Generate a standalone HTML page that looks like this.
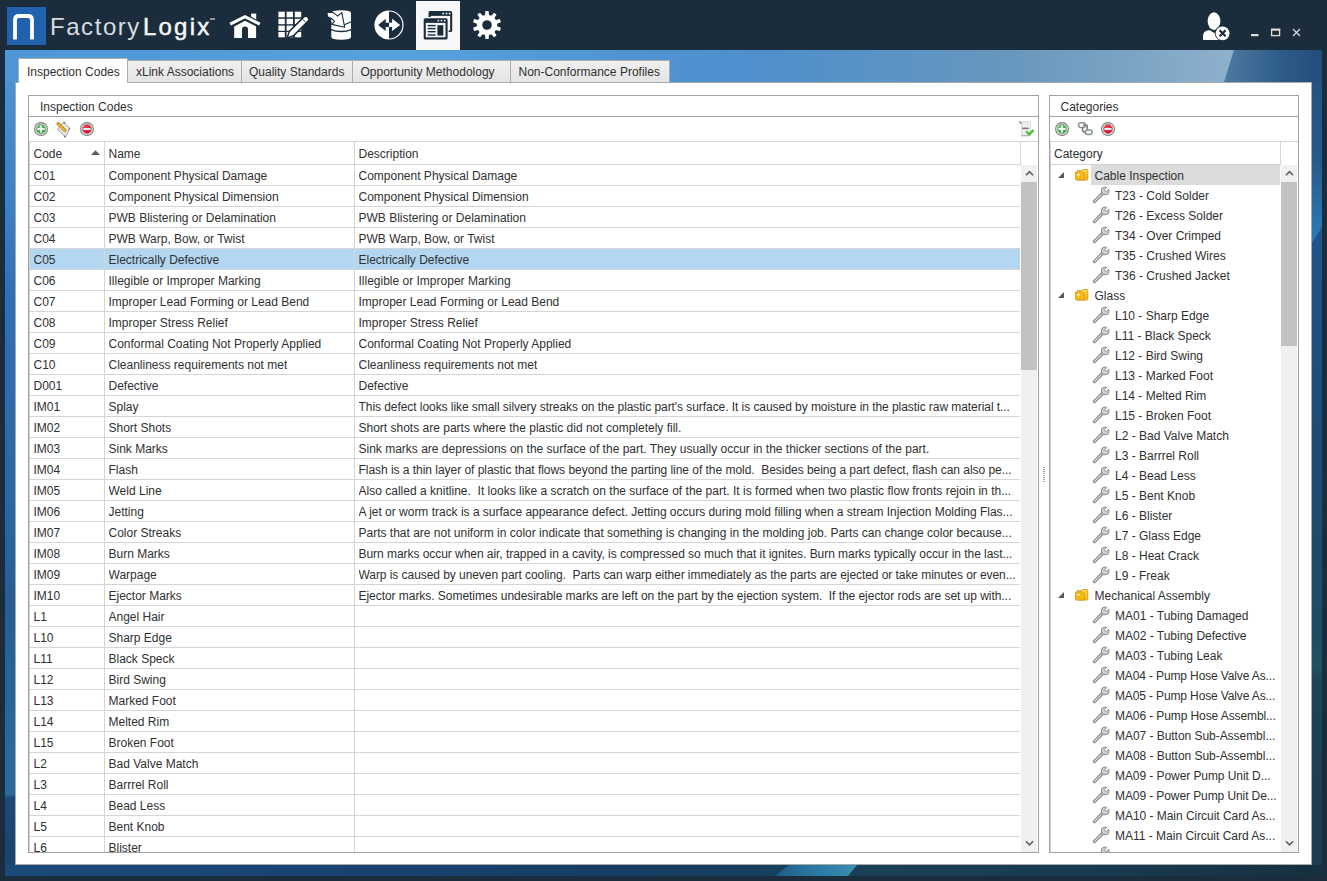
<!DOCTYPE html>
<html><head><meta charset="utf-8"><title>FactoryLogix</title>
<style>
*{box-sizing:border-box;margin:0;padding:0}
html,body{width:1327px;height:881px;overflow:hidden;background:#1b2d3c;font-family:"Liberation Sans",sans-serif;font-size:12px;color:#303030;position:relative}
.a{position:absolute}
svg{position:absolute;overflow:visible}
/* background */
#bgl{left:5px;top:50px;width:1317px;height:826px;background:linear-gradient(180deg,#4e96d6 0px,#3b82c6 150px,#2f6fb5 250px,#2a67a6 450px,#245e92 550px,#2a6c9e 744px,#1c4a7a 748px,#17426c 826px)}
#bgt{left:5px;top:50px;width:1317px;height:32px;background:linear-gradient(90deg,#4e96d6 0px,#56a2de 400px,#4e93d2 650px,#4f8fcc 760px,#5b93c4 880px,#6797bd 1000px,#7aa3c4 1120px,#8fb1cc 1230px)}
#bgd{left:1224px;top:50px;width:98px;height:32px;clip-path:polygon(10px 0,98px 0,98px 32px,0 32px);background:linear-gradient(90deg,#4b7aa2 0,#3d6b95 30px,#2c5a87 60px,#234d7a 98px)}
#bgr{left:1312px;top:82px;width:10px;height:794px;background:linear-gradient(180deg,#255282 0,#21548a 161px,#1f4f80 260px,#1e4a70 400px,#1f4c62 560px,#22545f 585px,#1d4354 600px,#1c3d4e 794px)}
#bgr2{left:1312px;top:82px;width:10px;height:162px;clip-path:polygon(0 0,10px 0,10px 145px,0 161px);background:linear-gradient(180deg,#255282 0,#265a8c 80px,#2a74ae 140px,#2b7ab4 161px)}
#bgb{left:5px;top:865px;width:1317px;height:11px;background:linear-gradient(90deg,#1b4b7a 0,#184473 300px,#163d62 650px,#173f5e 770px,#1a4058 860px,#183a50 1100px,#17303f 1317px)}
#bgh{left:775px;top:865px;width:82px;height:11px;clip-path:polygon(14px 0,82px 0,73px 11px,0 11px);background:linear-gradient(90deg,#1f5d84 0,#2a7aa3 40px,#3a8db3 82px)}
/* header */
#logo{left:7px;top:7px;width:39px;height:38px;background:#2062ad}
.brand{top:16px;font-size:24px;line-height:22px;color:#f4f6f8;white-space:nowrap}
#actbtn{left:416px;top:1px;width:44px;height:49px;background:#f8f8fa}
/* panel */
#panel{left:15px;top:82px;width:1297px;height:783px;background:#fff;border:1px solid #a9a9a9}
.tab{top:60px;height:23px;border:1px solid #acacac;background:linear-gradient(180deg,#f0f0f0,#e4e4e4);}
.tab.act{top:58px;height:25px;background:#fff;border-bottom:none;z-index:2}
.tabt{white-space:nowrap;z-index:3}
/* group boxes */
.gb{border:1px solid #a0a0a0;background:#fff}
.hl{height:1px;background:#a0a0a0}
.gl{background:#d4d4d4}
.lbl{white-space:nowrap;line-height:14px}
/* grid */
.r{position:absolute;left:30px;width:990px;height:21px;border-bottom:1px solid #d5d5d5;line-height:20px;white-space:nowrap}
.r.sel{background:#b3d7f1}
.r span{position:absolute;top:1px;overflow:hidden}
.c1{left:3.5px}
.c2{left:78.5px}
.c3{left:328.5px}
.vl{width:1px;background:#d5d5d5}
.sb{background:#f0f0f0}
.th{background:#c2c2c2}
/* tree */
.tr{position:absolute;z-index:0;left:1051px;width:229px;height:20px;line-height:20px;white-space:nowrap}
.tr span{position:absolute;top:1px}
.tt0{left:43.5px}
.tt1{left:64px}
.tsel:after{content:"";position:absolute;left:40px;top:0;width:189px;height:20px;background:#dcdcdc;z-index:-1}
.exp{position:absolute;left:7px;top:7px;width:0;height:0;border-left:6px solid transparent;border-bottom:6px solid #595959}
.fold{position:absolute;left:24px;top:4px}
.wr{position:absolute;left:40px;top:0}

</style></head><body>
<svg width="0" height="0" style="position:absolute">
<defs>
<radialGradient id="gG" cx="40%" cy="35%" r="70%"><stop offset="0" stop-color="#6fd06a"/><stop offset="1" stop-color="#1f9a27"/></radialGradient>
<radialGradient id="gR" cx="40%" cy="35%" r="70%"><stop offset="0" stop-color="#ff4a5a"/><stop offset="1" stop-color="#d4001c"/></radialGradient>
<linearGradient id="gF" x1="0" y1="0" x2="1" y2="1"><stop offset="0" stop-color="#fff27a"/><stop offset="1" stop-color="#f2b400"/></linearGradient>
<g id="wrench">
<path d="M3.4 16.6 L11 9" stroke="#8a8a8a" stroke-width="3.3" stroke-linecap="round"/>
<path d="M3.4 16.6 L11 9" stroke="#e4e4ec" stroke-width="1.1" stroke-linecap="round" stroke-dasharray="0.9 0.9"/>
<circle cx="14.2" cy="5.9" r="3.9" fill="#d0d0d0" stroke="#8a8a8a" stroke-width="1"/>
<rect x="-1.3" y="-5.8" width="2.6" height="5.6" fill="#fff" stroke="#8a8a8a" stroke-width="0.9" transform="translate(14.2 5.9) rotate(45)"/>
<rect x="-1.85" y="-7" width="3.7" height="3.2" fill="#fff" transform="translate(14.2 5.9) rotate(45)"/>
</g>
<g id="addI">
<circle cx="7" cy="7" r="6.4" fill="#fff" stroke="#7c7c7c" stroke-width="1.1"/>
<circle cx="7" cy="7" r="4.9" fill="none" stroke="#9c9c9c" stroke-width="0.9"/>
<circle cx="7" cy="7" r="4.4" fill="url(#gG)"/>
<rect x="3.4" y="6.1" width="7.2" height="1.8" fill="#fff"/><rect x="6.1" y="3.4" width="1.8" height="7.2" fill="#fff"/>
</g>
<g id="remI">
<circle cx="7" cy="7" r="6.4" fill="#fff" stroke="#7c7c7c" stroke-width="1.1"/>
<circle cx="7" cy="7" r="4.9" fill="none" stroke="#9c9c9c" stroke-width="0.9"/>
<circle cx="7" cy="7" r="4.4" fill="url(#gR)"/>
<rect x="3.4" y="6" width="7.2" height="2" fill="#eefafa"/>
</g>
<g id="fold">
<path d="M2.4 1.6 H7 L7.9 0.5 H12 Q12.8 0.5 12.8 1.3 V10.2 Q12.8 11 12 11 H2.4 Z" fill="url(#gF)" stroke="#d9962a" stroke-width="0.9"/>
<path d="M0.5 3.6 Q0.5 2.9 1.2 2.9 H7.4 L9.4 4.3 V11 H1.3 Q0.6 11 0.6 10.3 Z" fill="#f6bb0a" stroke="#d9962a" stroke-width="0.9"/>
<rect x="2" y="5" width="3" height="1.3" fill="#fff"/>
</g>
</defs>
</svg>

<div id="bgl" class="a"></div>
<div id="bgt" class="a"></div>
<div id="bgd" class="a"></div>
<div id="bgr" class="a"></div>
<div id="bgr2" class="a"></div>
<div id="bgb" class="a"></div>
<div id="bgh" class="a"></div>

<!-- header -->
<div id="logo" class="a"></div>
<div id="actbtn" class="a"></div>
<svg style="left:0;top:0" width="1327" height="50">
<path d="M15 39.5 V20 Q15 16 19 16 H28 Q32 16 32 20 V39.5" fill="none" stroke="#fff" stroke-width="3.8"/>
<!-- home -->
<rect x="251.1" y="13.6" width="5.1" height="7" fill="#fff"/>
<path d="M230.6 24 L245 16.7 L259.4 24" fill="none" stroke="#1b2d3c" stroke-width="5.4"/>
<path d="M230.2 24.2 L245 16.7 L259.8 24.2" fill="none" stroke="#fff" stroke-width="3.1"/>
<path d="M234.2 26.4 L245 20.8 L256.1 26.4 V38 H248 V29.6 Q248 26.6 245 26.6 Q242 26.6 242 29.6 V38 H234.2 Z" fill="#fff"/>
<!-- grid edit -->
<g fill="#fff">
<rect x="278.4" y="11.7" width="6.4" height="5.6"/><rect x="286.6" y="11.7" width="6.4" height="5.6"/><rect x="294.8" y="11.7" width="6.4" height="5.6"/>
<rect x="278.4" y="18.8" width="6.4" height="5.4"/><rect x="286.6" y="18.8" width="6.4" height="5.4"/><rect x="294.8" y="18.8" width="6.4" height="5.4"/>
<rect x="278.4" y="25.6" width="6.4" height="5.2"/><rect x="286.6" y="25.6" width="6.4" height="5.2"/><rect x="294.8" y="25.6" width="6.4" height="5.2"/>
<rect x="278.4" y="32" width="6.4" height="5.3"/><rect x="286.6" y="32" width="6.4" height="5.3"/><rect x="294.8" y="32" width="6.4" height="5.3"/>
</g>
<path d="M288.3 36.7 L289.9 31.9 L304.4 17.4 A2.3 2.3 0 0 1 307.6 20.6 L293.1 35.1 Z" fill="#1b2d3c" stroke="#1b2d3c" stroke-width="3" stroke-linejoin="round"/>
<path d="M288.3 36.7 L289.9 31.9 L304.4 17.4 A2.3 2.3 0 0 1 307.6 20.6 L293.1 35.1 Z" fill="#fff"/>
<path d="M302.6 19.2 L305.8 22.4" stroke="#1b2d3c" stroke-width="0.9"/>
<!-- db -->
<path d="M331.3 13 Q331.3 10.2 341.2 10.2 Q351 10.2 351 13 V37 Q351 39.7 341.2 39.7 Q331.3 39.7 331.3 37 Z" fill="#fff"/>
<path d="M330.5 29.3 Q341 33.8 352 29.3" fill="none" stroke="#1b2d3c" stroke-width="1.4"/>
<path d="M340 25.5 Q346 24.6 352 21.5" fill="none" stroke="#1b2d3c" stroke-width="1.3"/>
<path d="M327 12.3 L333.5 12.6 L337.6 16.2 L341.8 12.6 L344.6 27.2 L331.8 24.4 L334.6 21.3 L331.5 18.5 L327.4 16.8 Z" fill="#fff" stroke="#1b2d3c" stroke-width="1.1" stroke-linejoin="round"/>
<path d="M331.2 22 L330.2 25.5" stroke="#1b2d3c" stroke-width="1.4"/>
<!-- arrows circle -->
<circle cx="389" cy="25" r="14.6" fill="#fff"/>
<path d="M389 11.6 A13.4 13.4 0 0 1 389 38.4 Z" fill="#1b2d3c"/>
<path d="M378.2 25 L385.7 18.8 V22.8 H389 V27 H385.7 V31 Z" fill="#1b2d3c"/>
<path d="M400.2 25 L392.1 18.8 V22.8 H389 V27 H392.1 V31 Z" fill="#fff"/>
<!-- windows (active) -->
<g fill="#1b2d3c">
<rect x="428.5" y="11.1" width="23.7" height="21" rx="1.6"/>
</g>
<rect x="430.8" y="15.9" width="19.3" height="14.5" fill="#f8f8fa"/>
<g fill="#f8f8fa"><circle cx="443.2" cy="13.5" r="0.9"/><circle cx="446.5" cy="13.5" r="0.9"/><circle cx="449.6" cy="13.5" r="0.9"/></g>
<rect x="422.5" y="17" width="26.2" height="23.8" fill="#f8f8fa"/>
<rect x="423.7" y="18.2" width="23.9" height="21.4" rx="1.6" fill="#1b2d3c"/>
<rect x="425.8" y="22.9" width="19.7" height="14.4" fill="#f8f8fa"/>
<g fill="#f8f8fa"><circle cx="438.3" cy="20.6" r="0.9"/><circle cx="441.5" cy="20.6" r="0.9"/><circle cx="444.7" cy="20.6" r="0.9"/></g>
<g fill="#1b2d3c"><rect x="427.7" y="24.9" width="7.9" height="1.4"/><rect x="427.7" y="27.9" width="7.9" height="1.4"/><rect x="427.7" y="31" width="7.9" height="1.4"/><rect x="427.7" y="34.3" width="7.9" height="1.4"/>
<rect x="437.4" y="25.2" width="5.9" height="10.4"/></g>
<!-- gear -->
<g transform="translate(487 25)">
<path fill="#fff" fill-rule="evenodd" d="M-1.95 -10.01 L-1.61 -14.11 L1.61 -14.11 L1.95 -10.01 L4.31 -9.24 L6.99 -12.36 L9.59 -10.47 L7.46 -6.96 L8.92 -4.95 L12.92 -5.89 L13.91 -2.83 L10.12 -1.24 L10.12 1.24 L13.91 2.83 L12.92 5.89 L8.92 4.95 L7.46 6.96 L9.59 10.47 L6.99 12.36 L4.31 9.24 L1.95 10.01 L1.61 14.11 L-1.61 14.11 L-1.95 10.01 L-4.31 9.24 L-6.99 12.36 L-9.59 10.47 L-7.46 6.96 L-8.92 4.95 L-12.92 5.89 L-13.91 2.83 L-10.12 1.24 L-10.12 -1.24 L-13.91 -2.83 L-12.92 -5.89 L-8.92 -4.95 L-7.46 -6.96 L-9.59 -10.47 L-6.99 -12.36 L-4.31 -9.24 Z M4.8 0 A4.8 4.8 0 1 0 -4.8 0 A4.8 4.8 0 1 0 4.8 0 Z"/>
</g>
<!-- user -->
<ellipse cx="1214" cy="21.1" rx="6.4" ry="8.8" fill="#fff"/>
<path d="M1203 40 V36 Q1203 30.2 1210 30.2 L1214 33 L1218 30.2 Q1220 30.4 1221 31 V40 Z" fill="#fff"/>
<circle cx="1222.6" cy="33.3" r="7.8" fill="#1b2d3c"/>
<circle cx="1222.6" cy="33.3" r="6.9" fill="#fff"/>
<path d="M1219.6 30.3 L1225.6 36.3 M1225.6 30.3 L1219.6 36.3" stroke="#1b2d3c" stroke-width="2.2"/>
<!-- window controls -->
<rect x="1251" y="34" width="7.5" height="2.2" fill="#e0dcd8"/>
<rect x="1271.6" y="29.4" width="8" height="6.2" fill="none" stroke="#e0dcd8" stroke-width="1.3"/>
<rect x="1271" y="28.7" width="9.2" height="2" fill="#e0dcd8"/>
<path d="M1293 29 L1300 36 M1300 29 L1293 36" stroke="#e0dcd8" stroke-width="1.2"/>
</svg>
<div class="a brand" style="left:50px;letter-spacing:1.55px;color:#d6dce2">Factory</div><div class="a brand" style="left:143px;letter-spacing:2.2px;-webkit-text-stroke:0.5px #f4f6f8">Logix</div><div class="a" style="left:210px;top:18px;width:5px;height:1.5px;background:#8a96a0"></div>

<!-- panel -->
<div id="panel" class="a"></div>
<div class="a tab act" style="left:18px;width:110px"></div>
<div class="a tab" style="left:127px;width:115px"></div>
<div class="a tab" style="left:241px;width:112px"></div>
<div class="a tab" style="left:352px;width:159px"></div>
<div class="a tab" style="left:510px;width:160px"></div>
<div class="a tabt" style="left:27px;top:65px">Inspection Codes</div>
<div class="a tabt" style="left:136px;top:65px">xLink Associations</div>
<div class="a tabt" style="left:249px;top:65px">Quality Standards</div>
<div class="a tabt" style="left:360.5px;top:65px">Opportunity Methodology</div>
<div class="a tabt" style="left:518.5px;top:65px">Non-Conformance Profiles</div>

<!-- left group -->
<div class="a gb" style="left:28px;top:95px;width:1011px;height:758px"></div>
<div class="a hl" style="left:29px;top:116px;width:1009px"></div>
<div class="a lbl ttl" style="left:40px;top:100px">Inspection Codes</div>
<svg style="left:34px;top:122px" width="14" height="14"><use href="#addI"/></svg>
<svg style="left:56px;top:121px" width="16" height="17">
<path d="M7.5 1.2 L14 7.4 L9.6 16 L1.4 8.4 Z" fill="#e2e7ee" stroke="#9a9a9a" stroke-width="0.9" stroke-linejoin="round"/>
<path d="M7.6 1.2 L9 2.4 M13.8 7.4 L12.6 8.6 M9.6 16.2 L8.4 15" stroke="#707070" stroke-width="1.4"/>
<path d="M2.2 2.8 L8.8 9.4" stroke="#c08a18" stroke-width="3.4" stroke-linecap="round"/>
<path d="M2.4 3.2 L8.6 9.4" stroke="#f0c838" stroke-width="1.4" stroke-linecap="round" stroke-dasharray="1 1"/>
</svg>
<svg style="left:80px;top:122px" width="14" height="14"><use href="#remI"/></svg>
<svg style="left:1018px;top:120px" width="17" height="18">
<path d="M3.6 1.6 H12.6 V15.4 H3.6 Z" fill="#e9ecf0" stroke="#cfd2d6" stroke-width="0.8"/>
<path d="M1.2 1.4 L3.6 3.8" stroke="#7a8896" stroke-width="1.3"/>
<rect x="4.2" y="7.6" width="6.4" height="1.5" fill="#777"/>
<path d="M3 15.8 H11.5" stroke="#a8a8a8" stroke-width="1"/>
<path d="M8.8 12 L11.2 14.4 L15 10.6" fill="none" stroke="#50bc36" stroke-width="2.2" stroke-linecap="round" stroke-linejoin="round"/>
</svg>
<div class="a gl" style="left:29px;top:141px;width:1009px;height:1px"></div>
<div class="a gl" style="left:29px;top:141px;width:1px;height:711px"></div>
<div class="a gl" style="left:30px;top:164px;width:990px;height:1px"></div>
<div class="a lbl" style="left:33.5px;top:147px">Code</div>
<svg style="left:90px;top:149px" width="11" height="7"><path d="M1 6 L5.5 1.2 L10 6 Z" fill="#5a5a5a"/></svg>
<div class="a lbl" style="left:108.5px;top:147px">Name</div>
<div class="a lbl" style="left:358.5px;top:147px">Description</div>
<div class="a" style="left:30px;top:165px;width:990px;height:687px;overflow:hidden">
<div class="a" style="left:-30px;top:-165px;width:1327px;height:881px">
<div class="r" style="top:165px"><span class="c1">C01</span><span class="c2">Component Physical Damage</span><span class="c3">Component Physical Damage</span></div>
<div class="r" style="top:186px"><span class="c1">C02</span><span class="c2">Component Physical Dimension</span><span class="c3">Component Physical Dimension</span></div>
<div class="r" style="top:207px"><span class="c1">C03</span><span class="c2">PWB Blistering or Delamination</span><span class="c3">PWB Blistering or Delamination</span></div>
<div class="r" style="top:228px"><span class="c1">C04</span><span class="c2">PWB Warp, Bow, or Twist</span><span class="c3">PWB Warp, Bow, or Twist</span></div>
<div class="r sel" style="top:249px"><span class="c1">C05</span><span class="c2">Electrically Defective</span><span class="c3">Electrically Defective</span></div>
<div class="r" style="top:270px"><span class="c1">C06</span><span class="c2">Illegible or Improper Marking</span><span class="c3">Illegible or Improper Marking</span></div>
<div class="r" style="top:291px"><span class="c1">C07</span><span class="c2">Improper Lead Forming or Lead Bend</span><span class="c3">Improper Lead Forming or Lead Bend</span></div>
<div class="r" style="top:312px"><span class="c1">C08</span><span class="c2">Improper Stress Relief</span><span class="c3">Improper Stress Relief</span></div>
<div class="r" style="top:333px"><span class="c1">C09</span><span class="c2">Conformal Coating Not Properly Applied</span><span class="c3">Conformal Coating Not Properly Applied</span></div>
<div class="r" style="top:354px"><span class="c1">C10</span><span class="c2">Cleanliness requirements not met</span><span class="c3">Cleanliness requirements not met</span></div>
<div class="r" style="top:375px"><span class="c1">D001</span><span class="c2">Defective</span><span class="c3">Defective</span></div>
<div class="r" style="top:396px"><span class="c1">IM01</span><span class="c2">Splay</span><span class="c3" style="letter-spacing:-0.059px">This defect looks like small silvery streaks on the plastic part's surface. It is caused by moisture in the plastic raw material t...</span></div>
<div class="r" style="top:417px"><span class="c1">IM02</span><span class="c2">Short Shots</span><span class="c3">Short shots are parts where the plastic did not completely fill.</span></div>
<div class="r" style="top:438px"><span class="c1">IM03</span><span class="c2">Sink Marks</span><span class="c3">Sink marks are depressions on the surface of the part. They usually occur in the thicker sections of the part.</span></div>
<div class="r" style="top:459px"><span class="c1">IM04</span><span class="c2">Flash</span><span class="c3" style="letter-spacing:-0.035px">Flash is a thin layer of plastic that flows beyond the parting line of the mold.&nbsp; Besides being a part defect, flash can also pe...</span></div>
<div class="r" style="top:480px"><span class="c1">IM05</span><span class="c2">Weld Line</span><span class="c3" style="letter-spacing:0.013px">Also called a knitline.&nbsp; It looks like a scratch on the surface of the part. It is formed when two plastic flow fronts rejoin in th...</span></div>
<div class="r" style="top:501px"><span class="c1">IM06</span><span class="c2">Jetting</span><span class="c3" style="letter-spacing:-0.013px">A jet or worm track is a surface appearance defect. Jetting occurs during mold filling when a stream Injection Molding Flas...</span></div>
<div class="r" style="top:522px"><span class="c1">IM07</span><span class="c2">Color Streaks</span><span class="c3" style="letter-spacing:-0.004px">Parts that are not uniform in color indicate that something is changing in the molding job. Parts can change color because...</span></div>
<div class="r" style="top:543px"><span class="c1">IM08</span><span class="c2">Burn Marks</span><span class="c3" style="letter-spacing:-0.048px">Burn marks occur when air, trapped in a cavity, is compressed so much that it ignites. Burn marks typically occur in the last...</span></div>
<div class="r" style="top:564px"><span class="c1">IM09</span><span class="c2">Warpage</span><span class="c3" style="letter-spacing:-0.06px">Warp is caused by uneven part cooling.&nbsp; Parts can warp either immediately as the parts are ejected or take minutes or even...</span></div>
<div class="r" style="top:585px"><span class="c1">IM10</span><span class="c2">Ejector Marks</span><span class="c3" style="letter-spacing:-0.044px">Ejector marks. Sometimes undesirable marks are left on the part by the ejection system.&nbsp; If the ejector rods are set up with...</span></div>
<div class="r" style="top:606px"><span class="c1">L1</span><span class="c2">Angel Hair</span><span class="c3"></span></div>
<div class="r" style="top:627px"><span class="c1">L10</span><span class="c2">Sharp Edge</span><span class="c3"></span></div>
<div class="r" style="top:648px"><span class="c1">L11</span><span class="c2">Black Speck</span><span class="c3"></span></div>
<div class="r" style="top:669px"><span class="c1">L12</span><span class="c2">Bird Swing</span><span class="c3"></span></div>
<div class="r" style="top:690px"><span class="c1">L13</span><span class="c2">Marked Foot</span><span class="c3"></span></div>
<div class="r" style="top:711px"><span class="c1">L14</span><span class="c2">Melted Rim</span><span class="c3"></span></div>
<div class="r" style="top:732px"><span class="c1">L15</span><span class="c2">Broken Foot</span><span class="c3"></span></div>
<div class="r" style="top:753px"><span class="c1">L2</span><span class="c2">Bad Valve Match</span><span class="c3"></span></div>
<div class="r" style="top:774px"><span class="c1">L3</span><span class="c2">Barrrel Roll</span><span class="c3"></span></div>
<div class="r" style="top:795px"><span class="c1">L4</span><span class="c2">Bead Less</span><span class="c3"></span></div>
<div class="r" style="top:816px"><span class="c1">L5</span><span class="c2">Bent Knob</span><span class="c3"></span></div>
<div class="r" style="top:837px"><span class="c1">L6</span><span class="c2">Blister</span><span class="c3"></span></div>
</div></div>
<div class="a vl" style="left:104px;top:142px;height:710px"></div>
<div class="a vl" style="left:354px;top:142px;height:710px"></div>
<div class="a vl" style="left:1020px;top:142px;height:23px"></div>
<div class="a sb" style="left:1021px;top:165px;width:16px;height:687px"></div>
<div class="a th" style="left:1021px;top:182px;width:16px;height:188px"></div>
<svg style="left:1021px;top:165px" width="16" height="687">
<path d="M4.9 10.2 L8.5 6.6 L12.1 10.2" fill="none" stroke="#606060" stroke-width="1.6"/>
<path d="M4.9 676.2 L8.5 679.8 L12.1 676.2" fill="none" stroke="#606060" stroke-width="1.6"/>
</svg>

<svg style="left:1043px;top:467px" width="2" height="16"><g fill="#a4a4a4"><rect y="0" width="2" height="1"/><rect y="2" width="2" height="1"/><rect y="4" width="2" height="1"/><rect y="6" width="2" height="1"/><rect y="8" width="2" height="1"/><rect y="10" width="2" height="1"/><rect y="12" width="2" height="1"/><rect y="14" width="2" height="1"/></g></svg>
<!-- right group -->
<div class="a gb" style="left:1049px;top:95px;width:250px;height:758px"></div>
<div class="a hl" style="left:1050px;top:116px;width:248px"></div>
<div class="a lbl ttl" style="left:1060.5px;top:100px">Categories</div>
<svg style="left:1055px;top:122px" width="14" height="14"><use href="#addI"/></svg>
<svg style="left:1076px;top:120px" width="18" height="17">
<rect x="2.6" y="2.8" width="6.8" height="4.6" rx="2" fill="none" stroke="#8a9096" stroke-width="1.5"/>
<rect x="9.4" y="10" width="6.6" height="4.6" rx="2" fill="none" stroke="#8a9096" stroke-width="1.5"/>
<path d="M7 5 L11.2 5.5 V9.6 M6.6 6.8 V11.2 L9.6 13" fill="none" stroke="#7c7e74" stroke-width="1.5"/>
</svg>
<svg style="left:1101px;top:122px" width="14" height="14"><use href="#remI"/></svg>
<div class="a gl" style="left:1050px;top:141px;width:248px;height:1px"></div>
<div class="a gl" style="left:1050px;top:141px;width:1px;height:711px"></div>
<div class="a gl" style="left:1051px;top:164px;width:229px;height:1px"></div>
<div class="a vl" style="left:1280px;top:142px;height:23px"></div>
<div class="a lbl" style="left:1054px;top:147px">Category</div>
<div class="a" style="left:1051px;top:165px;width:229px;height:687px;overflow:hidden">
<div class="a" style="left:-1051px;top:-165px;width:1327px;height:881px">
<div class="tr tsel" style="top:165px"><i class="exp"></i><svg class="fold" width="14" height="12"><use href="#fold"/></svg><span class="tt0">Cable Inspection</span></div>
<div class="tr" style="top:185px"><svg class="wr" width="18" height="20"><use href="#wrench"/></svg><span class="tt1">T23 - Cold Solder</span></div>
<div class="tr" style="top:205px"><svg class="wr" width="18" height="20"><use href="#wrench"/></svg><span class="tt1">T26 - Excess Solder</span></div>
<div class="tr" style="top:225px"><svg class="wr" width="18" height="20"><use href="#wrench"/></svg><span class="tt1">T34 - Over Crimped</span></div>
<div class="tr" style="top:245px"><svg class="wr" width="18" height="20"><use href="#wrench"/></svg><span class="tt1">T35 - Crushed Wires</span></div>
<div class="tr" style="top:265px"><svg class="wr" width="18" height="20"><use href="#wrench"/></svg><span class="tt1">T36 - Crushed Jacket</span></div>
<div class="tr" style="top:285px"><i class="exp"></i><svg class="fold" width="14" height="12"><use href="#fold"/></svg><span class="tt0">Glass</span></div>
<div class="tr" style="top:305px"><svg class="wr" width="18" height="20"><use href="#wrench"/></svg><span class="tt1">L10 - Sharp Edge</span></div>
<div class="tr" style="top:325px"><svg class="wr" width="18" height="20"><use href="#wrench"/></svg><span class="tt1">L11 - Black Speck</span></div>
<div class="tr" style="top:345px"><svg class="wr" width="18" height="20"><use href="#wrench"/></svg><span class="tt1">L12 - Bird Swing</span></div>
<div class="tr" style="top:365px"><svg class="wr" width="18" height="20"><use href="#wrench"/></svg><span class="tt1">L13 - Marked Foot</span></div>
<div class="tr" style="top:385px"><svg class="wr" width="18" height="20"><use href="#wrench"/></svg><span class="tt1">L14 - Melted Rim</span></div>
<div class="tr" style="top:405px"><svg class="wr" width="18" height="20"><use href="#wrench"/></svg><span class="tt1">L15 - Broken Foot</span></div>
<div class="tr" style="top:425px"><svg class="wr" width="18" height="20"><use href="#wrench"/></svg><span class="tt1">L2 - Bad Valve Match</span></div>
<div class="tr" style="top:445px"><svg class="wr" width="18" height="20"><use href="#wrench"/></svg><span class="tt1">L3 - Barrrel Roll</span></div>
<div class="tr" style="top:465px"><svg class="wr" width="18" height="20"><use href="#wrench"/></svg><span class="tt1">L4 - Bead Less</span></div>
<div class="tr" style="top:485px"><svg class="wr" width="18" height="20"><use href="#wrench"/></svg><span class="tt1">L5 - Bent Knob</span></div>
<div class="tr" style="top:505px"><svg class="wr" width="18" height="20"><use href="#wrench"/></svg><span class="tt1">L6 - Blister</span></div>
<div class="tr" style="top:525px"><svg class="wr" width="18" height="20"><use href="#wrench"/></svg><span class="tt1">L7 - Glass Edge</span></div>
<div class="tr" style="top:545px"><svg class="wr" width="18" height="20"><use href="#wrench"/></svg><span class="tt1">L8 - Heat Crack</span></div>
<div class="tr" style="top:565px"><svg class="wr" width="18" height="20"><use href="#wrench"/></svg><span class="tt1">L9 - Freak</span></div>
<div class="tr" style="top:585px"><i class="exp"></i><svg class="fold" width="14" height="12"><use href="#fold"/></svg><span class="tt0">Mechanical Assembly</span></div>
<div class="tr" style="top:605px"><svg class="wr" width="18" height="20"><use href="#wrench"/></svg><span class="tt1">MA01 - Tubing Damaged</span></div>
<div class="tr" style="top:625px"><svg class="wr" width="18" height="20"><use href="#wrench"/></svg><span class="tt1">MA02 - Tubing Defective</span></div>
<div class="tr" style="top:645px"><svg class="wr" width="18" height="20"><use href="#wrench"/></svg><span class="tt1">MA03 - Tubing Leak</span></div>
<div class="tr" style="top:665px"><svg class="wr" width="18" height="20"><use href="#wrench"/></svg><span class="tt1" style="letter-spacing:-0.132px">MA04 - Pump Hose Valve As...</span></div>
<div class="tr" style="top:685px"><svg class="wr" width="18" height="20"><use href="#wrench"/></svg><span class="tt1" style="letter-spacing:-0.132px">MA05 - Pump Hose Valve As...</span></div>
<div class="tr" style="top:705px"><svg class="wr" width="18" height="20"><use href="#wrench"/></svg><span class="tt1" style="letter-spacing:-0.096px">MA06 - Pump Hose Assembl...</span></div>
<div class="tr" style="top:725px"><svg class="wr" width="18" height="20"><use href="#wrench"/></svg><span class="tt1" style="letter-spacing:-0.041px">MA07 - Button Sub-Assembl...</span></div>
<div class="tr" style="top:745px"><svg class="wr" width="18" height="20"><use href="#wrench"/></svg><span class="tt1" style="letter-spacing:-0.041px">MA08 - Button Sub-Assembl...</span></div>
<div class="tr" style="top:765px"><svg class="wr" width="18" height="20"><use href="#wrench"/></svg><span class="tt1" style="letter-spacing:-0.073px">MA09 - Power Pump Unit D...</span></div>
<div class="tr" style="top:785px"><svg class="wr" width="18" height="20"><use href="#wrench"/></svg><span class="tt1" style="letter-spacing:-0.091px">MA09 - Power Pump Unit De...</span></div>
<div class="tr" style="top:805px"><svg class="wr" width="18" height="20"><use href="#wrench"/></svg><span class="tt1" style="letter-spacing:-0.038px">MA10 - Main Circuit Card As...</span></div>
<div class="tr" style="top:825px"><svg class="wr" width="18" height="20"><use href="#wrench"/></svg><span class="tt1" style="letter-spacing:-0.007px">MA11 - Main Circuit Card As...</span></div>
<div class="tr" style="top:845px"><svg class="wr" width="18" height="20"><use href="#wrench"/></svg><span class="tt1"></span></div>
</div></div>
<div class="a sb" style="left:1281px;top:165px;width:16px;height:687px"></div>
<div class="a th" style="left:1281px;top:182px;width:16px;height:164px"></div>
<svg style="left:1281px;top:165px" width="16" height="687">
<path d="M4.9 10.2 L8.5 6.6 L12.1 10.2" fill="none" stroke="#606060" stroke-width="1.6"/>
<path d="M4.9 676.2 L8.5 679.8 L12.1 676.2" fill="none" stroke="#606060" stroke-width="1.6"/>
</svg>

</body></html>
